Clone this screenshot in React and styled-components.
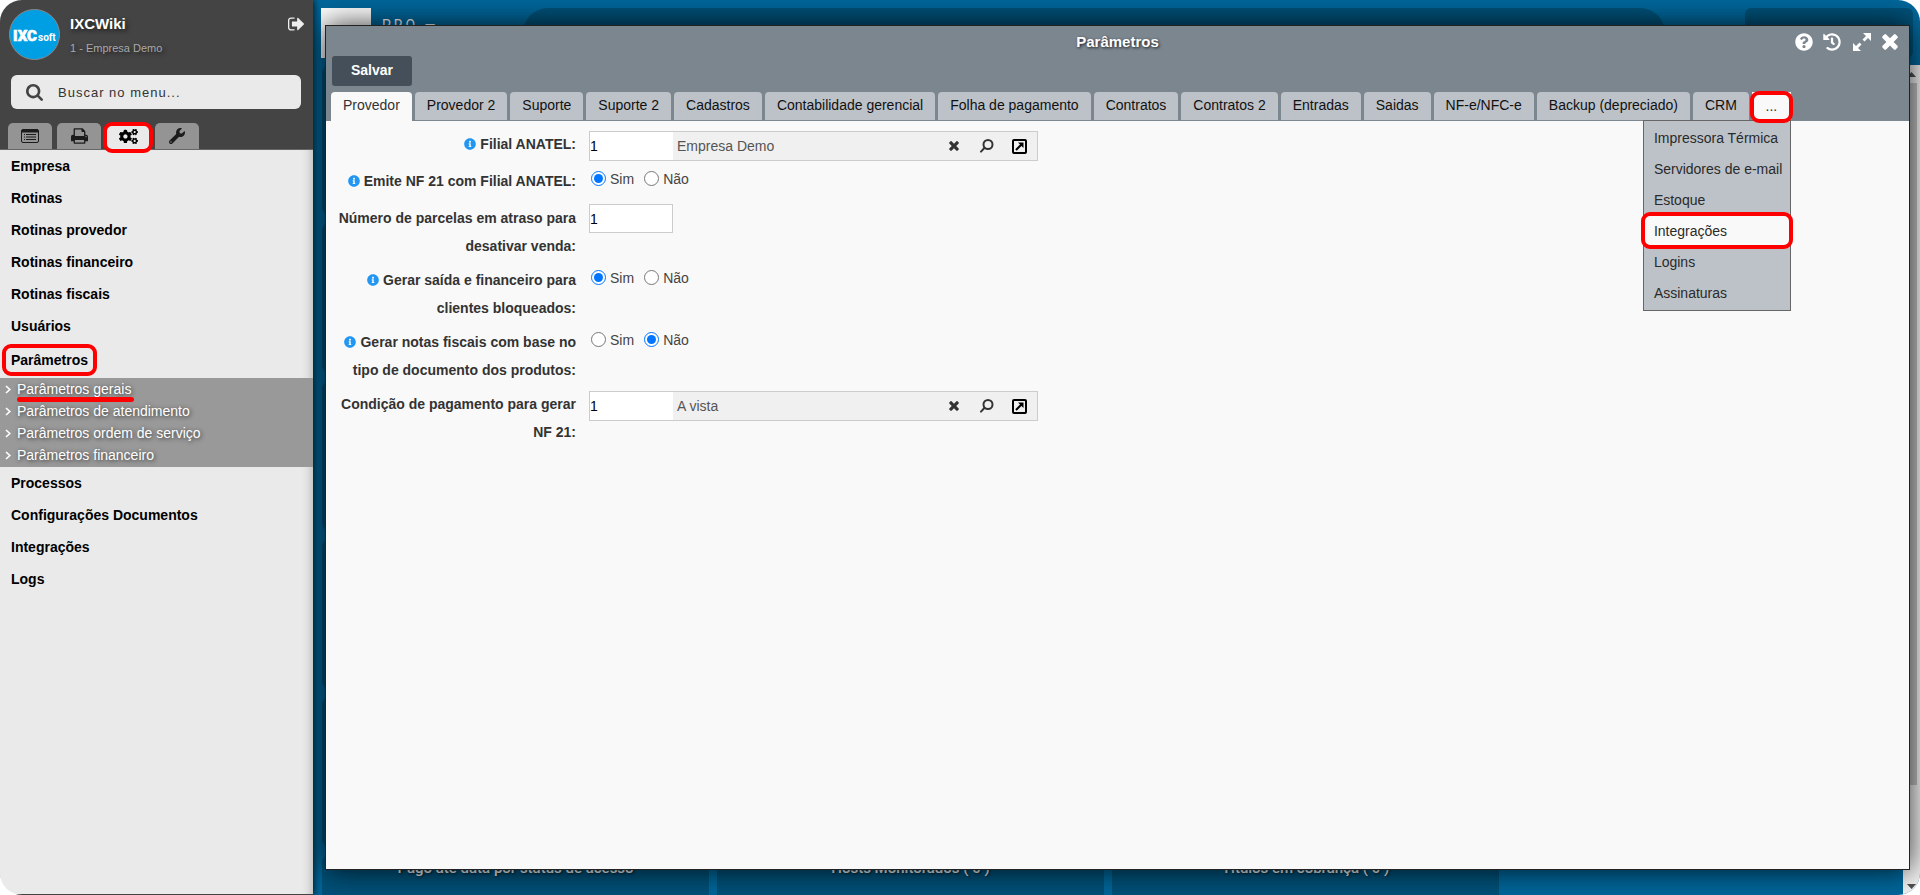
import React, { useState } from 'react';
import styled, { createGlobalStyle, css } from 'styled-components';
import { FaCogs, FaHistory, FaInfoCircle, FaQuestionCircle, FaWrench } from 'react-icons/fa';

const GlobalStyle = createGlobalStyle`
  * {
    box-sizing: border-box;
  }
  body {
    margin: 0;
    background: #fff;
    font-family: 'Liberation Sans', Arial, sans-serif;
    font-size: 14px;
  }
  button,
  input {
    font: inherit;
  }
`;

// red ring drawn over a highlighted element
const ring = css`
  position: relative;
  &::after {
    content: '';
    position: absolute;
    inset: ${(p) => p.$ringInset || '-2px'};
    border: 4px solid #f00;
    border-radius: 9px;
    pointer-events: none;
    z-index: 2;
  }
`;

const Shell = styled.div`
  display: flex;
  height: 100vh;
  border-radius: 22px;
  overflow: hidden;
`;

/* ---------- sidebar ---------- */

const Sidebar = styled.aside`
  width: 313px;
  flex: none;
  display: flex;
  flex-direction: column;
  position: relative;
  z-index: 1;
  background: #eaeaea;
  border-bottom: 1px solid #444;
  box-shadow: 2px 0 6px rgba(0, 0, 0, 0.6);
`;

const SidebarHeader = styled.header`
  background: #444;
  border-bottom: 1px solid #666;
`;

const Profile = styled.div`
  display: flex;
  gap: 10px;
  height: 75px;
  padding: 9px 9px 0;
`;

const Avatar = styled.svg`
  width: 51px;
  height: 51px;
  flex: none;
`;

const ProfileText = styled.div`
  flex: 1;
  padding-top: 4px;
  text-shadow: 2px 2px 4px rgba(0, 0, 0, 0.6);
`;

const UserName = styled.div`
  font-size: 15px;
  font-weight: bold;
  line-height: 22px;
  color: #fff;
`;

const CompanyName = styled.div`
  font-size: 11px;
  line-height: 26px;
  color: #aaa;
`;

const LogoutButton = styled.button`
  align-self: flex-start;
  height: 16px;
  margin-top: 8px;
  padding: 0;
  border: 0;
  background: none;
  color: #eee;
`;

const SearchBox = styled.label`
  display: flex;
  align-items: center;
  gap: 15px;
  height: 34px;
  margin: 0 12px 14px 11px;
  padding: 0 15px;
  border-radius: 6px;
  background: #eaeaea;
  color: #444;
`;

const SearchInput = styled.input`
  flex: 1;
  min-width: 0;
  padding: 0;
  border: 0;
  outline: 0;
  background: none;
  font-size: 13px;
  letter-spacing: 1px;
  &::placeholder {
    color: #333;
  }
`;

const ModuleTabs = styled.div`
  display: flex;
  gap: 5px;
  padding-left: 8px;
`;

const ModuleTab = styled.button`
  display: flex;
  justify-content: center;
  align-items: center;
  width: 44px;
  height: 26px;
  padding: 0;
  border: 0;
  border-radius: 5px 5px 0 0;
  background: ${(p) => (p.$active ? '#eaeaea' : '#949494')};
  color: ${(p) => (p.$active ? '#000' : '#1c1c1c')};
  ${(p) => p.$active && ring}
`;

const Menu = styled.nav`
  flex: 1;
  box-shadow: inset -12px 0 12px -12px rgba(0, 0, 0, 0.3);
`;

const MenuItem = styled.button`
  display: flex;
  align-items: center;
  width: 100%;
  height: ${(p) => (p.$open ? 36 : 32)}px;
  padding: 0 11px;
  border: 0;
  background: none;
  font-weight: bold;
  color: #000;
`;

const MenuMark = styled.span`
  ${ring}
`;

const SubMenu = styled.div`
  display: flex;
  flex-direction: column;
  padding-bottom: 1px;
  background: #999;
`;

const SubMenuLink = styled.a`
  display: flex;
  align-items: center;
  gap: 6px;
  height: 22px;
  padding-left: 5px;
  color: #fff;
  text-decoration: none;
  text-shadow: 1px 1px 4px rgba(0, 0, 0, 0.7);
`;

const Marked = styled.span`
  position: relative;
  &::after {
    content: '';
    position: absolute;
    left: 0;
    right: -3px;
    bottom: -5px;
    height: 5px;
    border-radius: 3px;
    background: #f00;
  }
`;

/* ---------- dashboard behind the window ---------- */

const Workspace = styled.main`
  flex: 1;
  min-width: 0;
  position: relative;
  display: flex;
  flex-direction: column;
  overflow: hidden;
  background: #00679b;
`;

const TopBar = styled.div`
  display: flex;
  height: 65px;
  flex: none;
  padding: 8px 7px 7px 8px;
`;

const LogoBlock = styled.div`
  width: 50px;
  background: #fff;
`;

const Brand = styled.div`
  width: 152px;
  padding: 6px 0 0 11px;
  font-family: Roboto, sans-serif;
  font-size: 14px;
  line-height: 22px;
  letter-spacing: 3px;
  color: #fff;
`;

const TopSearch = styled.div`
  flex: 1;
  margin-right: 80px;
  border-radius: 30px;
  background: #005179;
`;

const TopPanel = styled.div`
  width: 168px;
  border-radius: 6px;
  background: #005179;
`;

const DashBody = styled.div`
  display: flex;
  flex: 1;
  min-height: 0;
`;

const Cards = styled.div`
  flex: 1;
  display: grid;
  grid-template-columns: repeat(3, 387px);
  grid-auto-rows: 150px;
  gap: 8px;
  padding-left: 9px;
  overflow: hidden;
`;

const Card = styled.div`
  border-radius: 8px;
  background: #005179;
  padding-top: 2px;
  text-align: center;
  font-family: Roboto, sans-serif;
  font-size: 15px;
  font-weight: 500;
  line-height: 22px;
  color: #eee;
  text-shadow: 1px 1px 3px rgba(0, 0, 0, 0.7);
`;

const ScrollTrack = styled.div`
  width: 17px;
  display: flex;
  flex-direction: column;
  align-items: center;
  padding-bottom: 6px;
  background: #f1f1f1;
  color: #505050;
`;

const ScrollThumb = styled.div`
  width: 11px;
  height: 702px;
  margin-bottom: auto;
  background: #c1c1c1;
`;

const Arrow = styled.svg`
  width: 9px;
  height: 5px;
  margin: ${(p) => (p.$up ? '7px 0 6px' : '0')};
`;

/* ---------- window ---------- */

const Window = styled.section`
  position: absolute;
  inset: 25px 10px 25px 12px;
  display: flex;
  flex-direction: column;
  border: 1px solid #222;
  background: #f9f9f9;
  box-shadow: 0 0 28px rgba(0, 0, 0, 0.8);
`;

const WindowHeader = styled.header`
  background: #7c868f;
`;

const TitleBar = styled.div`
  display: grid;
  grid-template-columns: 1fr auto 1fr;
  align-items: center;
  height: 30px;
  padding: 0 10px;
`;

const Title = styled.h1`
  grid-column: 2;
  margin: 0;
  font-size: 15px;
  color: #fff;
  text-shadow: 1px 1px 3px rgba(0, 0, 0, 0.8);
`;

const WindowActions = styled.div`
  display: flex;
  justify-content: flex-end;
  gap: 10px;
  padding-top: 1px;
`;

const WindowButton = styled.button`
  display: flex;
  justify-content: center;
  align-items: center;
  width: 18px;
  height: 20px;
  padding: 0;
  border: 0;
  background: none;
  color: #fff;
  &:nth-child(3) {
    margin-left: 2px;
  }
`;

const SaveButton = styled.button`
  display: block;
  width: 80px;
  height: 30px;
  margin: 0 0 6px 6px;
  padding: 0 0 2px;
  border: 0;
  border-radius: 3px;
  background: #454f59;
  font-weight: bold;
  color: #fff;
`;

const TabBar = styled.div`
  display: flex;
  align-items: flex-start;
  gap: 3px;
  height: 29px;
  padding-left: 5px;
  white-space: nowrap;
`;

const Tab = styled.button`
  height: ${(p) => (p.$active ? 29 : 28)}px;
  padding: 0 12px ${(p) => (p.$active ? 3 : 2)}px;
  border: 0;
  border-radius: 4px 4px 0 0;
  background: ${(p) => (p.$active ? '#f9f9f9' : '#bdc2c8')};
  color: ${(p) => (p.$active ? '#333' : '#111')};
`;

const MoreTabs = styled.div`
  position: relative;
`;

const MoreButton = styled.button`
  width: 39px;
  height: 28px;
  padding: 0;
  border: 0;
  background: #f9f9f9;
  color: #333;
  ${ring}
`;

const MoreMenu = styled.div`
  position: absolute;
  top: 100%;
  right: 0;
  width: 148px;
  padding: 1px 0 2px;
  border: 1px solid #666;
  background: #bdc2c8;
`;

const MoreItem = styled.button`
  display: block;
  width: 100%;
  height: 31px;
  padding: 0 0 0 10px;
  border: 0;
  background: ${(p) => (p.$marked ? '#f9f9f9' : 'none')};
  text-align: left;
  color: #2a2a2a;
  ${(p) => p.$marked && ring}
`;

const Form = styled.form`
  display: flex;
  flex-direction: column;
  gap: 6px;
  padding: 9px 6px;
`;

const Row = styled.div`
  display: grid;
  grid-template-columns: 244px 1fr;
  column-gap: 13px;
  min-height: 31px;
`;

const Label = styled.label`
  font-weight: bold;
  line-height: 28px;
  text-align: right;
  color: #333;
`;

const InfoIcon = styled(FaInfoCircle)`
  width: 12px;
  height: 12px;
  margin-right: 4px;
  vertical-align: -1px;
  color: #2196f3;
`;

const CodeInput = styled.input`
  width: ${(p) => (p.$bare ? 83 : 84)}px;
  height: ${(p) => (p.$bare ? '100%' : '29px')};
  padding: 0;
  border: ${(p) => (p.$bare ? 0 : '1px solid #ccc')};
  outline: 0;
  background: #fff;
  color: #000;
`;

const LookupBox = styled.div`
  display: flex;
  align-items: center;
  width: 449px;
  max-width: 100%;
  height: 30px;
  margin-top: 1px;
  border: 1px solid #ccc;
  background: #f0f0f0;
`;

const LookupText = styled.span`
  flex: 1;
  padding-left: 4px;
  color: #555;
`;

const LookupButton = styled.button`
  display: flex;
  justify-content: center;
  align-items: center;
  width: 33px;
  height: 28px;
  padding: 0;
  border: 0;
  background: none;
  color: #333;
  &:last-child {
    margin-right: 1px;
    color: #000;
  }
`;

const Radios = styled.div`
  display: flex;
  align-items: center;
  gap: 10px;
  height: 23px;
  padding-left: 2px;
`;

const RadioLabel = styled.label`
  display: flex;
  align-items: center;
  gap: 4px;
  color: #444;
`;

const Radio = styled.input`
  width: 15px;
  height: 15px;
  margin: 0;
`;

/* ---------- icons ---------- */

const TimesIcon = ({ size }) => (
  <svg width={size} height={size} viewBox="290 374 1212 1180" fill="currentColor">
    <path d="M1490 1322q0 40-28 68l-136 136q-28 28-68 28t-68-28l-294-294-294 294q-28 28-68 28t-68-28l-136-136q-28-28-28-68t28-68l294-294-294-294q-28-28-28-68t28-68l136-136q28-28 68-28t68 28l294 294 294-294q28-28 68-28t68 28l136 136q28 28 28 68t-28 68l-294 294 294 294q28 28 28 68z" />
  </svg>
);

const LogoutIcon = () => (
  <svg width="16" height="14" viewBox="0 256 1568 1280" fill="currentColor">
    <path d="M640 1440q0 4 1 20t.5 26.5-3 23.5-10 19.5-20.5 6.5h-320q-119 0-203.5-84.5t-84.5-203.5v-704q0-119 84.5-203.5t203.5-84.5h320q13 0 22.5 9.5t9.5 22.5q0 4 1 20t.5 26.5-3 23.5-10 19.5-20.5 6.5h-320q-66 0-113 47t-47 113v704q0 66 47 113t113 47h312l11.5 1 11.5 3 8 5.5 7 9 2 13.5zm928-544q0 26-19 45l-544 544q-19 19-45 19t-45-19-19-45v-288h-448q-26 0-45-19t-19-45v-384q0-26 19-45t45-19h448v-288q0-26 19-45t45-19 45 19l544 544q19 19 19 45z" />
  </svg>
);

const SearchIcon = () => (
  <svg width="17" height="17" viewBox="64 128 1664 1664" fill="currentColor">
    <path d="M1216 832q0-185-131.5-316.5t-316.5-131.5-316.5 131.5-131.5 316.5 131.5 316.5 316.5 131.5 316.5-131.5 131.5-316.5zm512 832q0 52-38 90t-90 38q-54 0-90-38l-343-342q-179 124-399 124-143 0-273.5-55.5t-225-150-150-225-55.5-273.5 55.5-273.5 150-225 225-150 273.5-55.5 273.5 55.5 225 150 150 225 55.5 273.5q0 220-124 399l343 343q37 37 37 90z" />
  </svg>
);

const PrintIcon = () => (
  <svg width="17" height="16" viewBox="0 128 1664 1536" fill="currentColor">
    <path d="M384 1536h896v-256h-896v256zM384 896h896v-384h-160q-40 0-68-28t-28-68v-160h-640v640zM1536 960q0-26-19-45t-45-19-45 19-19 45 19 45 45 19 45-19 19-45zM1664 960v416q0 13-9.5 22.5t-22.5 9.5h-224v160q0 40-28 68t-68 28h-960q-40 0-68-28t-28-68v-160h-224q-13 0-22.5-9.5t-9.5-22.5v-416q0-79 56.5-135.5t135.5-56.5h64v-544q0-40 28-68t68-28h672q40 0 88 20t76 48l152 152q28 28 48 76t20 88v256h64q79 0 135.5 56.5t56.5 135.5z" />
  </svg>
);

const ListIcon = () => (
  <svg width="18" height="14" viewBox="0 0 18 14" fill="none" stroke="currentColor">
    <rect x="0.5" y="0.5" width="17" height="13" rx="1.5" />
    <path d="M1 2h16" strokeWidth="3" />
    <path d="M3 5.5h1M3 8h1M3 10.5h1M5 5.5h10M5 8h10M5 10.5h10" />
  </svg>
);

const ExpandIcon = () => (
  <svg width="18" height="18" viewBox="0 0 18 18" fill="currentColor">
    <path d="M10 0h8v8l-3-3-3.500 3.500-2-2L13 3zM0 10l3 3 3.500-3.500 2 2L5 15l3 3H0z" />
  </svg>
);

const LensIcon = () => (
  <svg width="14" height="14" viewBox="0 0 14 14" fill="none" stroke="currentColor" strokeWidth="2">
    <circle cx="8" cy="5.500" r="4.500" />
    <path d="M4.600 8.800L1 12.600" strokeLinecap="round" />
  </svg>
);

const OpenIcon = () => (
  <svg width="15" height="15" viewBox="0 0 15 15" fill="none" stroke="currentColor" strokeWidth="2">
    <rect x="1" y="1" width="13" height="13" rx="1" />
    <path d="M4 11l5.500-5.500" />
    <path d="M6 3.500h5.500V9z" fill="currentColor" stroke="none" />
  </svg>
);

const ChevronIcon = () => (
  <svg width="6" height="9" viewBox="0 0 6 9" fill="none" stroke="#fff" strokeWidth="1.600">
    <path d="M1 1l3.800 3.500L1 8" />
  </svg>
);

const CompanyLogo = () => (
  <Avatar viewBox="0 0 51 51">
    <circle cx="25.500" cy="25.500" r="25" fill="#009fe3" stroke="#888" />
    <text x="4" y="32" fontSize="15" fontWeight="900" fontFamily="Roboto" fill="#fff" stroke="#fff" strokeWidth="0.600">
      IXC
    </text>
    <text x="29" y="32" fontSize="10" fontWeight="700" fontFamily="Roboto" fill="#fff">
      soft
    </text>
  </Avatar>
);

/* ---------- data ---------- */

const menuTop = ['Empresa', 'Rotinas', 'Rotinas provedor', 'Rotinas financeiro', 'Rotinas fiscais', 'Usuários'];
const subMenu = ['Parâmetros gerais', 'Parâmetros de atendimento', 'Parâmetros ordem de serviço', 'Parâmetros financeiro'];
const menuBottom = ['Processos', 'Configurações Documentos', 'Integrações', 'Logs'];

const tabs = [
  'Provedor', 'Provedor 2', 'Suporte', 'Suporte 2', 'Cadastros', 'Contabilidade gerencial',
  'Folha de pagamento', 'Contratos', 'Contratos 2', 'Entradas', 'Saidas', 'NF-e/NFC-e',
  'Backup (depreciado)', 'CRM',
];
const moreTabs = ['Impressora Térmica', 'Servidores de e-mail', 'Estoque', 'Integrações', 'Logins', 'Assinaturas'];

const cardTitles = ['Pago até data por status de acesso', 'Hosts Monitorados ( 0 )', 'Títulos em cobrança ( 0 )'];
const cards = [...Array(15).fill(''), ...cardTitles];

/* ---------- parts ---------- */

const Lookup = ({ id, code, text }) => (
  <LookupBox>
    <CodeInput id={id} type="text" defaultValue={code} $bare />
    <LookupText>{text}</LookupText>
    <LookupButton type="button" aria-label="Limpar"><TimesIcon size={10} /></LookupButton>
    <LookupButton type="button" aria-label="Pesquisar"><LensIcon /></LookupButton>
    <LookupButton type="button" aria-label="Abrir"><OpenIcon /></LookupButton>
  </LookupBox>
);

const YesNo = ({ id, initial }) => {
  const [value, setValue] = useState(initial);
  return (
    <Radios role="radiogroup" aria-labelledby={`${id}-label`}>
      {['Sim', 'Não'].map((option) => (
        <RadioLabel key={option}>
          <Radio type="radio" name={id} checked={value === option} onChange={() => setValue(option)} />
          {option}
        </RadioLabel>
      ))}
    </Radios>
  );
};

const Field = ({ id, label, info, group, children }) => (
  <Row>
    <Label as={group ? 'span' : 'label'} id={`${id}-label`} htmlFor={group ? undefined : id}>
      {info && <InfoIcon />}
      {label}
    </Label>
    <div>{children}</div>
  </Row>
);

const App = () => {
  const [tab, setTab] = useState('Provedor');

  return (
    <>
      <GlobalStyle />
      <Shell>
        <Sidebar>
          <SidebarHeader>
            <Profile>
              <CompanyLogo />
              <ProfileText>
                <UserName>IXCWiki</UserName>
                <CompanyName>1 - Empresa Demo</CompanyName>
              </ProfileText>
              <LogoutButton aria-label="Sair"><LogoutIcon /></LogoutButton>
            </Profile>
            <SearchBox>
              <SearchIcon />
              <SearchInput type="text" placeholder="Buscar no menu..." aria-label="Buscar no menu" />
            </SearchBox>
            <ModuleTabs>
              <ModuleTab aria-label="Cadastros"><ListIcon /></ModuleTab>
              <ModuleTab aria-label="Relatórios"><PrintIcon /></ModuleTab>
              <ModuleTab aria-label="Configurações" $active $ringInset="-1px -3px -4px"><FaCogs size={19} /></ModuleTab>
              <ModuleTab aria-label="Ferramentas"><FaWrench size={16} /></ModuleTab>
            </ModuleTabs>
          </SidebarHeader>
          <Menu>
            {menuTop.map((item) => <MenuItem key={item}>{item}</MenuItem>)}
            <MenuItem $open>
              <MenuMark $ringInset="-8px -9px">Parâmetros</MenuMark>
            </MenuItem>
            <SubMenu>
              {subMenu.map((item, i) => (
                <SubMenuLink key={item} href="#">
                  <ChevronIcon />
                  {i === 0 ? <Marked>{item}</Marked> : item}
                </SubMenuLink>
              ))}
            </SubMenu>
            {menuBottom.map((item) => <MenuItem key={item}>{item}</MenuItem>)}
          </Menu>
        </Sidebar>

        <Workspace>
          <TopBar>
            <LogoBlock />
            <Brand>PRO —</Brand>
            <TopSearch />
            <TopPanel />
          </TopBar>
          <DashBody>
            <Cards>
              {cards.map((title, i) => <Card key={i}>{title}</Card>)}
            </Cards>
            <ScrollTrack>
              <Arrow $up viewBox="0 0 9 5"><path d="M0 5l4.500-5L9 5z" fill="currentColor" /></Arrow>
              <ScrollThumb />
              <Arrow viewBox="0 0 9 5"><path d="M0 0l4.500 5L9 0z" fill="currentColor" /></Arrow>
            </ScrollTrack>
          </DashBody>

          <Window>
            <WindowHeader>
              <TitleBar>
                <Title>Parâmetros</Title>
                <WindowActions>
                  <WindowButton aria-label="Ajuda"><FaQuestionCircle size={18} /></WindowButton>
                  <WindowButton aria-label="Histórico"><FaHistory size={18} /></WindowButton>
                  <WindowButton aria-label="Expandir"><ExpandIcon /></WindowButton>
                  <WindowButton aria-label="Fechar"><TimesIcon size={16} /></WindowButton>
                </WindowActions>
              </TitleBar>
              <SaveButton>Salvar</SaveButton>
              <TabBar>
                {tabs.map((name) => (
                  <Tab key={name} $active={tab === name} onClick={() => setTab(name)}>{name}</Tab>
                ))}
                <MoreTabs>
                  <MoreButton $ringInset="-1px -2px -3px">...</MoreButton>
                  <MoreMenu>
                    {moreTabs.map((name) => (
                      <MoreItem key={name} $marked={name === 'Integrações'} $ringInset="-3px">{name}</MoreItem>
                    ))}
                  </MoreMenu>
                </MoreTabs>
              </TabBar>
            </WindowHeader>
            <Form>
              <Field id="filial" label="Filial ANATEL:" info>
                <Lookup id="filial" code="1" text="Empresa Demo" />
              </Field>
              <Field id="nf21" label="Emite NF 21 com Filial ANATEL:" info group>
                <YesNo id="nf21" initial="Sim" />
              </Field>
              <Field id="parcelas" label="Número de parcelas em atraso para desativar venda:">
                <CodeInput id="parcelas" type="text" defaultValue="1" />
              </Field>
              <Field id="bloqueados" label="Gerar saída e financeiro para clientes bloqueados:" info group>
                <YesNo id="bloqueados" initial="Sim" />
              </Field>
              <Field id="notas" label="Gerar notas fiscais com base no tipo de documento dos produtos:" info group>
                <YesNo id="notas" initial="Não" />
              </Field>
              <Field id="condicao" label="Condição de pagamento para gerar NF 21:">
                <Lookup id="condicao" code="1" text="A vista" />
              </Field>
            </Form>
          </Window>
        </Workspace>
      </Shell>
    </>
  );
};

export default App;
